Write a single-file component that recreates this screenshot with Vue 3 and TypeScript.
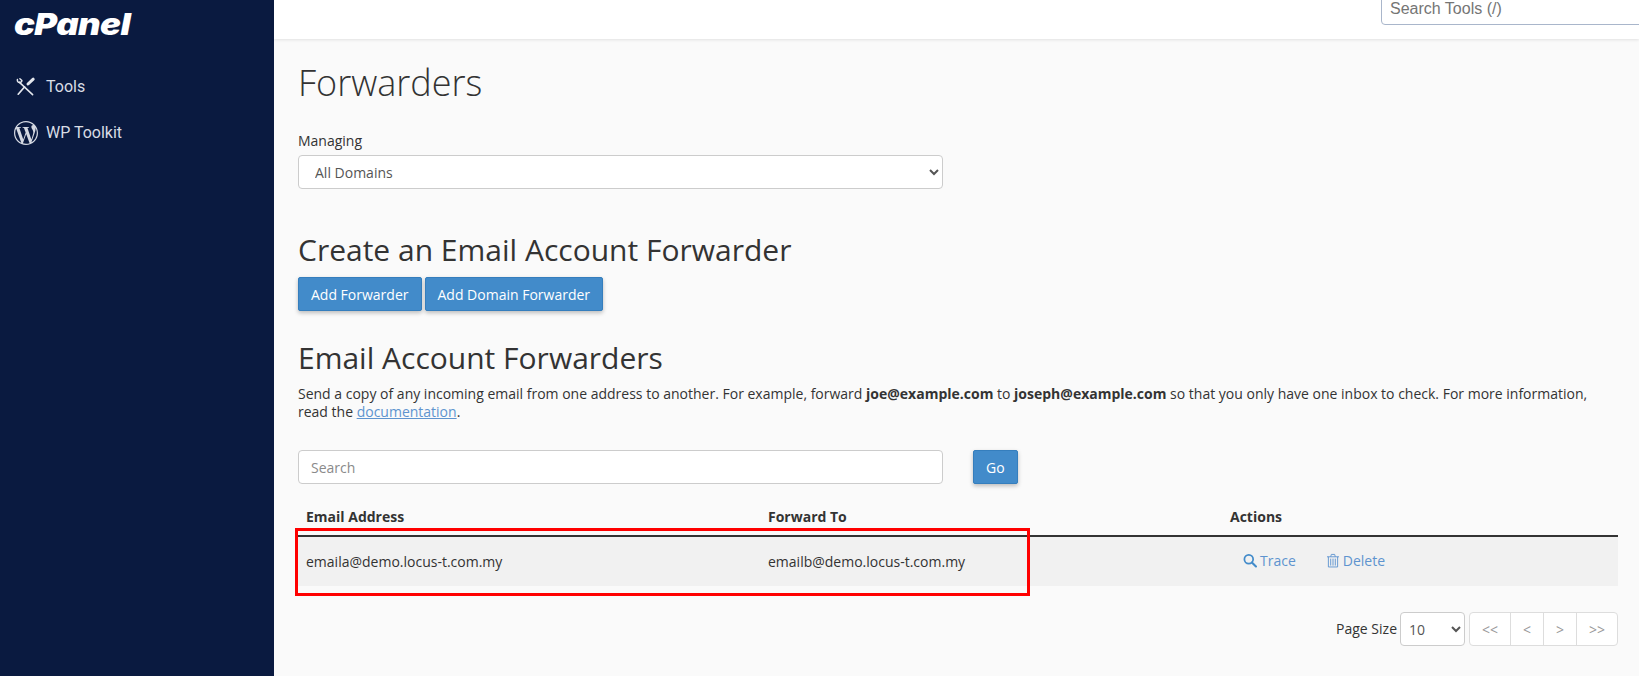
<script setup lang="ts">
const pages: string[] = ['<<', '<', '>', '>>']
</script>

<template>
  <div class="page">
    <aside class="sidebar">
      <div class="logo"><span class="logo-text">cPanel</span></div>
      <nav class="nav">
        <a class="nav-item">
          <svg class="nav-icon" viewBox="0 0 24 24" fill="none" stroke="#e3e6ec" stroke-linecap="round" stroke-linejoin="round">
            <path d="M5.2 7.2 18.6 19.6" stroke-width="1.6" />
            <path d="M3.4 4.6c-.3 1.5.5 2.8 2.2 2.9 1.200 0 2.200-.8 2.300-2L5.900 3.800" stroke-width="1.5" />
            <path d="M10.500 12 4.200 19.200" stroke-width="1.700" />
            <path d="M14 9 19.200 4.200" stroke-width="3" />
          </svg>
          <span>Tools</span>
        </a>
        <a class="nav-item">
          <svg class="nav-icon" viewBox="0 0 24 24" fill="#d5d9e2">
            <path d="M21.469 6.825c.84 1.537 1.318 3.3 1.318 5.175 0 3.979-2.156 7.456-5.363 9.325l3.295-9.527c.615-1.54.82-2.771.82-3.864 0-.405-.026-.78-.07-1.11m-7.981.105c.647-.03 1.232-.105 1.232-.105.582-.075.514-.93-.067-.899 0 0-1.755.135-2.88.135-1.064 0-2.85-.15-2.85-.15-.585-.03-.661.855-.075.885 0 0 .54.061 1.125.09l1.68 4.605-2.37 7.08L5.354 6.9c.649-.03 1.234-.1 1.234-.1.585-.075.516-.93-.065-.896 0 0-1.746.138-2.874.138-.2 0-.438-.008-.69-.015C4.911 3.15 8.235 1.215 12 1.215c2.809 0 5.365 1.072 7.286 2.833-.046-.003-.091-.009-.141-.009-1.06 0-1.812.923-1.812 1.914 0 .89.513 1.643 1.06 2.531.411.72.89 1.643.89 2.977 0 .915-.354 1.994-.821 3.479l-1.075 3.585-3.9-11.61.001.014zM12 22.784c-1.059 0-2.081-.153-3.048-.437l3.237-9.406 3.315 9.087c.024.053.05.101.078.149-1.12.393-2.325.609-3.582.609M1.211 12c0-1.564.336-3.05.935-4.39L7.29 21.709C3.694 19.96 1.212 16.271 1.211 12M12 0C5.385 0 0 5.385 0 12s5.385 12 12 12 12-5.385 12-12S18.615 0 12 0" />
          </svg>
          <span>WP Toolkit</span>
        </a>
      </nav>
    </aside>

    <div class="main">
      <header class="topbar">
        <div class="tools-search">Search Tools (/)</div>
      </header>

      <main class="content">
        <h1>Forwarders</h1>

        <label class="field-label">Managing</label>
        <select class="control wide">
          <option>All Domains</option>
        </select>

        <h2 class="create-title">Create an Email Account Forwarder</h2>
        <div class="btn-row">
          <button class="btn">Add Forwarder</button>
          <button class="btn">Add Domain Forwarder</button>
        </div>

        <h2 class="list-title">Email Account Forwarders</h2>
        <p class="desc">
          Send a copy of any incoming email from one address to another. For example, forward
          <b>joe@example.com</b> to <b>joseph@example.com</b> so that you only have one inbox to check. For more
          information, read the <a class="link">documentation</a>.
        </p>

        <div class="search-row">
          <input class="control wide search" placeholder="Search" />
          <button class="btn go">Go</button>
        </div>

        <div class="table-wrap">
          <table>
            <thead>
              <tr>
                <th class="col">Email Address</th>
                <th class="col">Forward To</th>
                <th>Actions</th>
              </tr>
            </thead>
            <tbody>
              <tr>
                <td>emaila@demo.locus-t.com.my</td>
                <td>emailb@demo.locus-t.com.my</td>
                <td class="actions">
                  <a class="action">
                    <svg class="a-icon" viewBox="0 0 16 16" fill="none" stroke="#428bca" stroke-width="2">
                      <circle cx="6.6" cy="6.6" r="5" />
                      <path d="M10.2 10.2 14.8 14.8" stroke-width="2.4" stroke-linecap="round" />
                    </svg>
                    Trace
                  </a>
                  <a class="action delete">
                    <svg class="a-icon trash" viewBox="0 0 13 15" fill="none" stroke="#5e94cf" stroke-width="1">
                      <path d="M0 3.500h13M4 3.500 4.700.9h3.600l.7 2.600" />
                      <path d="M1.500 3.500v11h10v-11M4 5.500v7.500M6.500 5.500v7.500M9 5.500v7.500" />
                    </svg>
                    Delete
                  </a>
                </td>
              </tr>
            </tbody>
          </table>
          <div class="highlight"></div>
        </div>

        <div class="pager">
          <span class="pager-label">Page Size</span>
          <select class="control size">
            <option>10</option>
          </select>
          <div class="pager-group">
            <button v-for="p in pages" :key="p" class="pager-btn">{{ p }}</button>
          </div>
        </div>
      </main>
    </div>
  </div>
</template>

<style>
html, body { margin: 0; background: #fafafa; }
</style>

<style scoped>
.page {
  display: flex;
  width: 1639px;
  height: 676px;
  overflow: hidden;
  font-family: "Open Sans", sans-serif;
  font-size: 14px;
  line-height: 20px;
  color: #333;
  background: #fafafa;
}
.sidebar {
  width: 274px;
  flex: none;
  background: #0a1a40;
  color: #d9dde5;
  font-family: Roboto, sans-serif;
}
.logo {
  height: 39px;
  padding-left: 14px;
  color: #fff;
}
.logo-text {
  display: inline-block;
  font-family: Inter, sans-serif;
  font-weight: 900;
  font-style: italic;
  font-size: 30px;
  line-height: 48px;
  letter-spacing: -.5px;
  transform: scaleX(1.16);
  transform-origin: left center;
}
.nav { padding-top: 25px; }
.nav-item {
  display: flex;
  align-items: center;
  height: 46px;
  padding-left: 14px;
  font-size: 16px;
  gap: 8px;
}
.nav-icon { width: 24px; height: 24px; flex: none; }
.main { flex: 1; min-width: 0; display: flex; flex-direction: column; }
.topbar {
  height: 39px;
  flex: none;
  box-sizing: border-box;
  background: #fff;
  box-shadow: 0 1px 3px rgba(0,0,0,.1);
  overflow: hidden;
  display: flex;
  align-items: flex-end;
  padding: 0 0 14px 1107px;
}
.tools-search {
  flex: none;
  box-sizing: border-box;
  width: 300px;
  height: 34px;
  padding: 9px 8px 0;
  border: 1px solid #a9b6cb;
  border-radius: 4px;
  font-family: "Liberation Sans", sans-serif;
  font-size: 16px;
  line-height: 16px;
  color: #757575;
  background: #fff;
}
.content { padding: 0 21px 0 24px; }
h1 {
  margin: 22px 0 0;
  font-size: 36px;
  line-height: 44px;
  font-weight: 300;
}
.field-label {
  display: block;
  margin-top: 26px;
  font-weight: 500;
  line-height: 20px;
}
.control {
  box-sizing: border-box;
  height: 34px;
  border: 1px solid #ccc;
  border-radius: 4px;
  background: #fff;
  color: #555;
  font-family: "Open Sans", sans-serif;
  font-size: 14px;
}
.wide { display: block; width: 645px; padding: 0 12px; margin-top: 4px; }
h2 {
  margin: 0;
  font-size: 30px;
  line-height: 40px;
  font-weight: 400;
}
.create-title { margin-top: 41px; }
.btn-row { display: flex; gap: 3px; margin-top: 7px; }
.btn {
  box-sizing: border-box;
  height: 34px;
  padding: 0 12px;
  border: 1px solid #357ebd;
  border-radius: 2px;
  background: #428bca;
  color: #fff;
  font-family: "Open Sans", sans-serif;
  font-size: 14px;
  box-shadow: 0 2px 4px rgba(0,0,0,.25);
}
.list-title { margin-top: 27px; }
.desc { margin: 7px 0 0; line-height: 18px; }
.link { color: #5e94cf; text-decoration: underline; }
.search-row { display: flex; align-items: flex-start; margin-top: 29px; }
.search { margin-top: 0; }
.search::placeholder { color: #8a8a8a; opacity: 1; }
.go { margin-left: 30px; }
.table-wrap { position: relative; margin-top: 15px; }
table { width: 1320px; border-collapse: collapse; table-layout: fixed; }
th, td { box-sizing: border-box; }
.col { width: 35%; }
th {
  height: 37px;
  padding: 0 8px;
  text-align: left;
  font-weight: 700;
  border-bottom: 2px solid #333;
}
td { height: 50px; padding: 0 8px; background: #f1f1f1; }
td.actions { padding: 1px 8px 0 21px; }
.action { margin-right: 31px; display: inline-flex; align-items: center; gap: 3px; color: #5e94cf; }
.delete { gap: 4px; }
.a-icon { width: 14px; height: 15px; }
.trash { width: 12px; }
.highlight {
  position: absolute;
  left: -3px;
  top: 29px;
  width: 735px;
  height: 68px;
  box-sizing: border-box;
  border: 3px solid #f00;
  pointer-events: none;
}
.pager { display: flex; justify-content: flex-end; align-items: center; margin-top: 26px; width: 1320px; }
.pager-label { margin-right: 3px; }
.size { width: 65px; padding: 0 4px; }
.pager-group {
  display: flex;
  height: 34px;
  box-sizing: border-box;
  margin-left: 4px;
  border: 1px solid #ddd;
  border-radius: 4px;
  background: #fff;
}
.pager-btn {
  border: 0;
  border-left: 1px solid #ddd;
  background: transparent;
  color: #999;
  font-family: "Open Sans", sans-serif;
  font-size: 14px;
  width: 33px;
  padding: 0;
}
.pager-btn:first-child { border-left: 0; width: 40px; }
.pager-btn:last-child { width: 41px; }
</style>
